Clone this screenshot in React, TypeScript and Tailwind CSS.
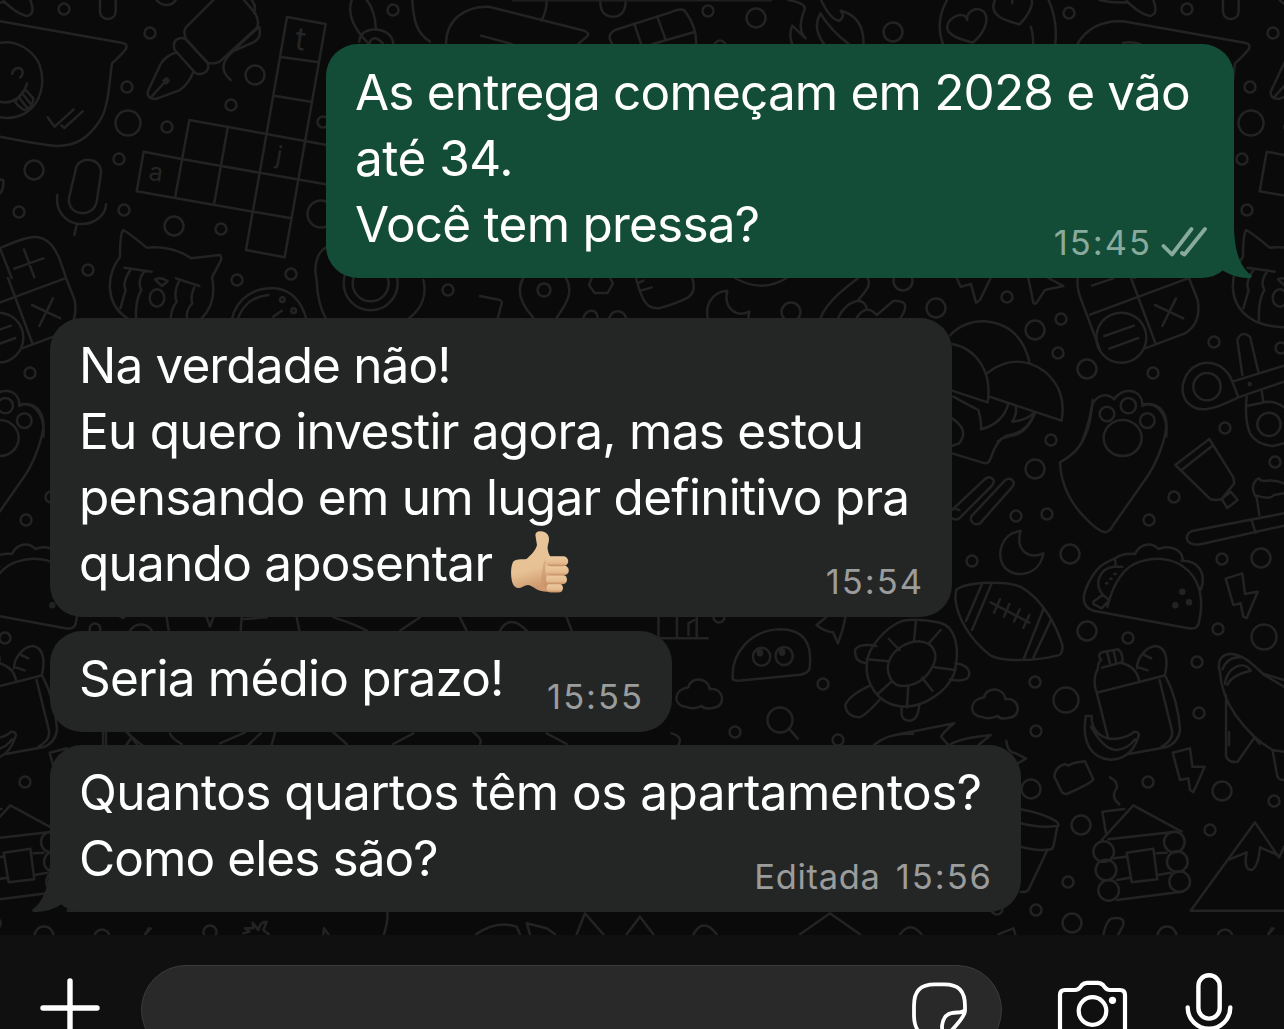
import React from "react";

interface MessageType {
    lines: { text: string, tracking: string }[]
    time: string
    edited?: boolean
    sent?: boolean
    tail?: boolean
    thumb?: boolean
    className: string
}

const messages: MessageType[] = [
    {
        lines: [
            {text: "As entrega começam em 2028 e vão", tracking: "tracking-[-0.83px]"},
            {text: "até 34.", tracking: "tracking-[-0.5px]"},
            {text: "Você tem pressa?", tracking: "tracking-[-0.76px]"},
        ],
        time: "15:45",
        sent: true,
        tail: true,
        className: "ml-[326px] mt-[44px] w-[908px] h-[234px] pt-[15px] bg-[#144d37]",
    },
    {
        lines: [
            {text: "Na verdade não!", tracking: "tracking-[-0.87px]"},
            {text: "Eu quero investir agora, mas estou", tracking: "tracking-[-0.73px]"},
            {text: "pensando em um lugar definitivo pra", tracking: "tracking-[-0.74px]"},
            {text: "quando aposentar", tracking: "tracking-[-0.76px]"},
        ],
        time: "15:54",
        thumb: true,
        className: "ml-[50px] mt-[40px] w-[902px] h-[299px] pt-[14px] bg-[#242626]",
    },
    {
        lines: [{text: "Seria médio prazo!", tracking: "tracking-[-0.81px]"}],
        time: "15:55",
        className: "ml-[50px] mt-[14px] w-[622px] h-[101px] pt-[14px] bg-[#242626]",
    },
    {
        lines: [
            {text: "Quantos quartos têm os apartamentos?", tracking: "tracking-[-0.53px]"},
            {text: "Como eles são?", tracking: "tracking-[-0.91px]"},
        ],
        time: "15:56",
        edited: true,
        tail: true,
        className: "ml-[50px] mt-[13px] w-[971px] h-[167px] pt-[14px] bg-[#242626]",
    },
]

// loose bubbles scattered between the doodles: x, y, radius
const dots = [
    [64, 9, 6], [150, 33, 6], [127, 87, 6], [255, 75, 10], [231, 105, 6], [128, 123, 13], [167, 127, 6],
    [119, 159, 6], [34, 170, 10], [19, 212, 6], [124, 210, 6], [174, 226, 10], [221, 229, 6], [88, 270, 6],
    [237, 280, 6], [291, 274, 6], [323, 122, 6], [321, 214, 14], [393, 10, 6], [708, 11, 6], [756, 18, 10],
    [893, 32, 10], [1069, 13, 6], [720, 46, 6], [1007, 297, 6], [936, 308, 10], [1061, 319, 6],
    [1035, 330, 10], [1058, 353, 6], [1087, 369, 10], [1153, 373, 6], [1214, 342, 6], [1281, 348, 6],
    [1225, 428, 6], [1051, 440, 6], [1035, 469, 10], [1016, 516, 6], [1047, 514, 6], [1174, 497, 6],
    [1149, 520, 6], [1275, 462, 6], [972, 561, 6], [1070, 554, 10], [1222, 559, 6], [1261, 558, 10],
    [1087, 631, 10], [1128, 638, 6], [1218, 629, 6], [1264, 637, 13], [1197, 662, 6], [823, 684, 6],
    [735, 732, 6], [838, 740, 6], [1035, 682, 6], [1066, 700, 13], [1199, 713, 6], [1036, 731, 6],
    [1031, 789, 10], [1222, 791, 10], [1148, 782, 6], [719, 617, 6], [1274, 801, 6], [1081, 825, 10],
    [1210, 830, 6], [1068, 882, 6], [1036, 910, 6], [1072, 923, 10], [997, 909, 6], [1167, 936, 10],
    [1225, 937, 8], [210, 932, 7], [448, 290, 6], [544, 290, 7], [791, 312, 10], [903, 281, 10],
    [780, 720, 13],
]

const Doodles = () => (
    <g fill="none" stroke="#232323" strokeWidth="2.5" strokeLinecap="round" strokeLinejoin="round"
       className="[&_*]:[vector-effect:non-scaling-stroke]">
        {dots.map(([cx, cy, r]) => <circle key={cx + "-" + cy} cx={cx} cy={cy} r={r - 0.5}/>)}

        {/* chat bubble, pen, crossword, microphone, crying cat */}
        <g transform="scale(.33333)">
            <path d="M0 64L365 128Q385 132 378 146Q366 163 336 190C325 270 325 330 294 370C265 412 230 438 170 438Q110 432 0 410"/>
            <path d="M0 128C50 120 95 148 117 190C140 250 120 310 80 337C50 355 25 356 0 352M0 305C35 315 70 290 81 250"/>
            <path d="M36 222C42 198 65 200 68 216Q68 228 60 232M45 305L75 268L100 295Q100 320 76 331Q60 325 45 305M58 293L80 322M68 282L91 310"/>
            <path d="M143 352L164 380L221 328M184 376L193 384L248 334"/>
            <path d="M10 3C35 25 55 43 80 48Q108 43 91 0"/>
            <path d="M300 0V33C300 50 313 57 323 57C337 57 347 48 347 33V0M470 0C485 20 515 20 527 0"/>
            <path d="M640 0L557 83Q548 100 561 122L622 187Q640 195 660 184L770 84Q780 68 766 40L732 0M755 0Q770 18 762 40M778 82Q785 115 760 127L700 153Q645 200 692 240M678 172L773 84"/>
            <path d="M540 115Q515 120 524 150L585 218Q600 228 618 215Q630 200 622 188L561 121Q550 112 540 115ZM531 157Q500 165 483 190L443 275Q442 300 470 296L538 271Q565 253 579 218M455 290L497 243M490 242l10 -7l6 7l-7 8z"/>
            <path d="M861 51L977 72L915 425L854 772L738 750L800 400ZM843 171L957 187M822 287L936 306M568 360L977 434M549 478L977 553M568 360L525 594M431 455L549 478M431 455L410 574L874 655M683 383L643 608M758 635L738 750"/>
            <path d="M228 505C235 468 307 470 303 520L290 605C280 655 202 650 207 594ZM172 585C165 640 205 675 250 672C290 670 318 640 318 613M230 675L223 705M0 540Q12 535 10 550Q10 570 0 580"/>
            <path d="M370 690Q395 705 440 743Q515 735 574 775L658 765Q670 770 658 790L636 832C650 900 625 935 605 955Q560 985 483 982C430 978 400 970 375 950C320 910 315 830 360 770Q360 700 370 690Z"/>
            <path d="M373 803L455 815M391 810Q365 850 377 870L361 925M432 815Q410 845 424 870Q405 900 408 962M528 835L598 858M536 845Q520 880 530 905Q510 930 512 970M583 862Q570 890 577 910Q555 930 562 965M465 838Q485 830 503 844L486 858Z"/>
            <ellipse cx="471" cy="894" rx="22" ry="26"/>
            <path d="M695 960C710 890 770 860 825 865C875 870 905 905 920 960M712 960C730 910 760 890 805 885M820 950l25 -18"/>
            <circle cx="847" cy="899" r="7"/><circle cx="881" cy="932" r="7"/>
            <path d="M980 742C950 755 940 800 950 840C952 900 965 935 980 960M1270 840C1280 880 1270 925 1220 960"/>
            <circle cx="1112" cy="850" r="81"/><circle cx="1112" cy="850" r="54"/>
            <path d="M0 744C40 728 90 705 115 712C150 720 165 745 178 775L198 833M0 745L35 834M43 806L130 775M72 748L103 832"/>
            <path d="M1055 0C1040 45 1065 90 1105 130M1100 0Q1125 30 1128 88M1078 125Q1080 90 1128 88Q1175 95 1180 130M1108 130Q1120 100 1148 130M1237 0C1240 60 1250 100 1290 125"/>
        </g>

        {/* strip above the first message */}
        <g transform="translate(320 0) scale(.6148 .33333)">
            <path d="M205 132C205 60 235 18 275 20L430 92Q440 102 434 110L420 132M262 107L312 132M368 0Q370 30 360 62M456 0Q455 50 477 50Q498 48 497 0"/>
            <path d="M475 130Q465 105 480 90L570 37Q590 20 595 37Q612 80 612 130M511 70L522 130M549 52L562 118M541 132L609 96"/>
            <path d="M762 0Q792 10 788 30Q775 90 790 115L768 77Q762 105 768 132M815 0Q830 60 845 62Q855 50 847 32Q885 50 884 132M814 40Q800 85 820 132M814 40Q830 90 860 132"/>
            <path d="M1020 0Q1000 65 1013 132M1185 0Q1200 60 1196 132M1156 80Q1160 100 1160 132M1053 60C1050 30 1020 50 1020 82C1020 110 1050 122 1062 128C1080 100 1090 60 1080 35C1065 15 1050 40 1053 60ZM1098 0C1085 50 1120 65 1138 73C1150 50 1160 20 1158 0M1126 0V10"/>
            <path d="M1268 0Q1290 10 1314 7M1232 132C1245 90 1270 60 1306 64"/>
        </g>

        {/* between the first two messages */}
        <g transform="translate(480 260) scale(.33333)">
            <path d="M0 108L60 120Q70 125 62 140L54 173M130 54C105 95 130 140 160 173M258 54C282 95 260 130 230 173"/>
            <path d="M335 54L327 75L344 99H383L399 70L390 54M310 173C320 145 350 145 353 173M388 173C400 145 430 150 438 173"/>
            <path d="M468 54C485 120 500 150 540 144Q590 130 625 112Q650 95 637 54M473 70L490 62M483 92L515 82"/>
            <path d="M765 54Q845 100 920 54M683 173C675 130 700 95 742 92C730 140 765 175 808 155L805 173"/>
            <path d="M1022 173C1040 125 1100 80 1135 54M1162 54Q1175 70 1155 95L1135 120M1075 173C1090 140 1120 120 1140 123Q1160 130 1160 148M1130 173Q1160 130 1190 165L1240 123Q1290 120 1270 160L1262 173"/>
            <path d="M1430 54L1442 80L1473 72L1488 128L1500 120L1532 54M1645 54L1660 128Q1665 135 1672 125L1695 90L1750 78L1705 54"/>
        </g>

        {/* pill pack, beach umbrella, paw, keys */}
        <g transform="translate(900 200) scale(.33333)">
            <path d="M533 234Q530 260 540 290L600 450M867 234L893 300Q905 370 855 400L735 445M570 344L862 236M693 234L767 432M576 257L640 235M765 315L850 355M828 295L787 378M613 408L702 377M628 446L715 414"/>
            <circle cx="664" cy="413" r="75"/>
            <path d="M150 406C180 375 220 363 255 364C325 370 370 410 388 485M156 432C225 445 278 510 263 607L156 572M263 518C320 475 380 475 435 515C480 555 495 600 485 662L268 590M160 590Q205 615 235 630Q245 660 243 688Q310 670 325 610M347 620Q352 640 337 665Q380 660 400 640M405 638C370 730 320 695 293 725"/>
            <path d="M548 720Q570 660 573 630C580 585 620 575 642 598C665 560 725 565 727 613C770 605 805 640 799 710"/>
            <circle cx="621" cy="642" r="22"/><circle cx="685" cy="617" r="23"/><circle cx="742" cy="662" r="22"/>
            <path d="M997 545C980 500 940 480 900 492C850 510 835 570 860 605C890 640 930 635 1015 592ZM997 545L1152 497M1015 592L1152 545M1027 525L1012 420Q1025 390 1050 410L1075 515M1040 590Q1033 660 1050 700Q1070 735 1120 738L1152 730M1085 572L1090 605M1040 618L1100 605Q1130 605 1152 622"/>
            <circle cx="921" cy="560" r="41"/><circle cx="1107" cy="673" r="35"/><circle cx="1049" cy="552" r="3"/>
        </g>

        {/* french fries, moon, football, taco, toothbrush */}
        <g transform="translate(900 400) scale(.33333)">
            <path d="M156 160L255 190Q268 190 273 172Q290 120 320 107Q380 100 405 40M156 55Q210 90 177 130L156 138M156 330L255 237Q270 225 281 240Q283 250 275 258L178 355Q165 362 156 355M164 325L178 330M213 350L315 241Q330 230 341 245Q343 255 335 263L240 370Q220 378 213 360Z"/>
            <path d="M362 393C300 400 290 465 312 500C345 540 420 525 430 460C385 480 345 450 362 393Z"/>
            <path d="M578 0Q573 60 562 90C545 140 520 165 480 187C482 260 520 320 560 358Q590 390 615 397Q630 395 640 375L745 225C780 170 805 90 798 60C790 15 750 5 727 18"/>
            <ellipse cx="668" cy="114" rx="57" ry="54"/>
            <path d="M928 117L826 195L932 298Q950 302 965 297L1003 250L1000 232ZM845 210L940 135M965 297L992 275L1013 300L982 324Z"/>
            <path d="M1152 340L875 393Q855 405 863 422Q875 438 905 432L1152 377M1055 362L1067 398M1078 345L1070 292C1050 270 1060 240 1078 235Q1080 245 1100 242Q1130 240 1152 250M1070 287Q1110 300 1122 285L1152 280"/>
            <path d="M168 570C200 545 320 540 365 562C430 600 470 680 487 735Q490 765 470 767C400 785 300 785 270 765C210 720 170 650 166 595ZM246 552L198 663M275 550L216 690M430 628L372 775M453 660L400 773M272 607L388 668M300 598L282 638M328 612L312 650M359 628L342 665M388 645L370 683"/>
            <path d="M580 632C545 620 545 590 565 550C590 500 610 490 645 475Q670 458 705 462C720 430 755 425 775 447C805 435 845 445 848 478M580 632L865 685Q895 690 897 665C912 600 900 560 880 530C845 480 780 465 720 485C670 500 640 550 622 620M645 475L647 495M580 605L608 584L628 600L605 625L580 612ZM608 584C580 550 600 505 640 500L667 500M845 482C895 480 920 520 903 568"/>
            <g fill="#232323">
                <circle cx="847" cy="575" r="6"/><circle cx="826" cy="616" r="6"/><circle cx="867" cy="607" r="6"/>
            </g>
            <path d="M631 536h4M643 522h4M618 550h4"/>
            <path d="M977 536L1027 520L1035 582L1073 575L1040 654L1030 650L1022 610L1000 615Z"/>
        </g>

        {/* turtle, backpack, rocket */}
        <g transform="translate(640 600) scale(.4107 .33333)">
            <path d="M0 115H165M45 50V112M90 50V110M118 105V70L132 60M138 50V110"/>
            <path d="M226 238C220 160 270 90 340 88C400 88 420 130 413 205Q410 220 390 224L240 242Q226 242 226 238Z"/>
            <ellipse cx="296" cy="170" rx="21" ry="27"/><ellipse cx="351" cy="168" rx="21" ry="27"/>
            <g fill="#232323">
                <ellipse cx="292" cy="158" rx="5" ry="8"/><ellipse cx="346" cy="156" rx="5" ry="8"/>
            </g>
            <path d="M453 52L430 75Q450 95 470 97L482 130Q495 90 500 52"/>
            <path d="M110 320C80 315 80 270 118 262C122 230 165 230 170 268C205 260 210 320 180 323Q160 330 150 318Q130 330 110 320ZM830 350C800 345 800 300 838 292C842 260 885 260 890 298C925 290 930 350 900 353Q880 360 870 348Q850 360 830 350ZM362 385L384 416"/>
            <path d="M640 62C600 80 555 140 552 190C548 250 580 310 630 318C690 330 750 270 765 220C780 150 770 80 730 68C700 60 670 55 640 62Z"/>
            <path d="M603 205C605 155 645 125 680 124C725 130 725 175 710 205C690 250 650 265 625 255Q605 240 603 205ZM672 62L667 124M732 90L703 130M606 117L632 150M552 178L604 184M768 210L717 202M712 272L687 233M650 322L653 260M579 282L612 245"/>
            <path d="M575 138C540 130 520 140 524 160Q525 185 550 190M768 190C800 195 805 215 800 230Q790 248 755 238M560 257Q510 285 500 315Q502 350 535 352Q550 345 583 300M637 322V345Q640 362 658 362Q678 358 680 312"/>
            <path d="M570 434Q610 395 665 402M633 402L765 370Q740 395 733 410L750 434M757 432Q780 415 854 405L825 434M892 423Q895 460 915 460L940 476L920 490"/>
            <path d="M1115 205Q1115 185 1123 180Q1110 160 1130 155L1165 148Q1178 165 1174 187L1125 203M1137 155L1145 195M1153 152L1160 190M1115 205Q1100 240 1112 278L1140 415M1112 278L1275 227M1170 188C1195 195 1210 210 1215 240M1210 205C1210 170 1235 138 1258 138C1285 145 1285 190 1278 225M1228 165L1245 175M1216 203L1236 211M1265 240L1295 390Q1300 420 1270 440M1280 230Q1310 300 1315 390Q1310 430 1280 442L1190 462"/>
            <path d="M1085 348H1100V362C1105 400 1130 420 1160 416Q1190 412 1203 395Q1220 395 1212 415C1200 460 1175 478 1145 479C1100 475 1075 430 1085 350M1098 380Q1130 450 1160 450Q1190 445 1205 418"/>
            <path d="M1568 260L1520 225C1490 190 1465 160 1435 162C1412 165 1405 190 1412 215C1415 270 1430 310 1450 345Q1490 415 1540 450L1568 455M1427 285V470Q1435 490 1455 485L1495 415M1515 220L1568 240M1424 252C1430 200 1470 180 1487 212Q1440 225 1430 255M1418 208Q1430 170 1462 172M1540 450L1552 530Q1555 540 1568 540"/>
        </g>

        {/* cup, bread, cabin, mountain */}
        <g transform="translate(960 700) scale(.33333)">
            <path d="M283 230Q285 200 315 192L325 197Q335 190 345 188L375 184L400 238Q395 250 320 282Q310 283 305 275ZM450 232Q475 245 470 265Q450 290 478 313M638 158L690 145L697 200L734 200L700 277L690 270L685 235L660 240Z"/>
            <path d="M182 328Q250 340 290 365Q300 375 292 380L280 440Q275 450 262 450L205 570Q200 577 182 576M182 370Q240 385 290 378M182 440Q240 455 275 448"/>
            <path d="M425 420L520 316L665 395M427 335L493 327M427 335L438 400M445 418L640 396M460 475L498 470M470 540L510 533M590 460L620 458M593 525L632 518M470 600L665 575M500 458L580 446L592 538L515 547Z"/>
            <circle cx="431" cy="455" r="31"/><circle cx="438" cy="510" r="31"/><circle cx="446" cy="571" r="31"/>
            <circle cx="643" cy="426" r="31"/><circle cx="652" cy="485" r="31"/><circle cx="659" cy="545" r="31"/>
            <path d="M972 632H692L885 367L957 473L972 440M808 478L860 457Q850 510 875 510Q895 500 900 442L957 467"/>
            <path d="M115 703L160 685L166 703M430 705Q440 655 460 655Q495 650 490 675L475 703M925 703L935 685"/>
        </g>

        {/* strip above the composer */}
        <g transform="translate(0 900) scale(.33333)">
            <path d="M436 103L452 85M730 100L748 95L735 85L760 85L758 68L775 90Q780 65 800 65L790 90L806 103M970 103L972 85L985 103M1152 103Q1165 60 1162 36"/>
            <path d="M1428 103Q1490 60 1550 80L1560 103M1590 103L1580 70L1640 85L1665 103M1730 103L1755 40L1810 103M1880 103L1920 50L1960 103M2080 103Q2110 50 2150 103M2400 103L2490 40L2580 103M2700 103Q2730 60 2765 103"/>
        </g>

        {/* slits between the grey messages */}
        <g transform="translate(0 580) scale(.33333)">
            <path d="M500 112L506 152M620 112L630 140L640 112M725 112L722 152M725 118L800 112M890 112L898 152M318 457V495M385 460L410 492M510 460Q515 475 545 492M660 490L735 457M745 495L782 460M825 457L815 495"/>
            <path d="M1000 112Q1060 130 1100 152M1200 152L1260 112M1380 112L1400 152M1500 152Q1530 100 1580 152M1700 112L1715 152M1000 457L1040 492M1180 492L1240 460M1420 457Q1450 480 1440 492M1640 460L1700 492M2015 460Q2050 470 2035 495"/>
        </g>
    </g>
)

const Wallpaper = () => (
    <svg className="absolute inset-0" width="1284" height="935" viewBox="0 0 1284 935" aria-hidden="true">
        <Doodles/>
        <g transform="translate(1123 0)"><Doodles/></g>
        <g transform="translate(-1123 0)"><Doodles/></g>
        <g fill="#252525" className="font-['Inter',sans-serif]">
            <text x="295" y="50" fontSize="32" transform="rotate(8 300 40)">t</text>
            <text x="149" y="181" fontSize="25" transform="rotate(10 157 173)">a</text>
            <text x="276" y="164" fontSize="25" transform="rotate(10 280 157)">j</text>
        </g>
        <path d="M512 0.5H772" stroke="#1e1e1e" strokeWidth="2"/>
    </svg>
)

const Thumb = () => (
    <svg className="ml-[19px] mb-[1px] shrink-0" width="60" height="64" viewBox="0 0 60 64">
        <defs>
            <linearGradient id="skin" x1="0" y1="0" x2="0.2" y2="1">
                <stop offset="0" stopColor="#e9c79c"/>
                <stop offset="0.7" stopColor="#e6c194"/>
                <stop offset="1" stopColor="#cf9a70"/>
            </linearGradient>
            <linearGradient id="finger" x1="0" y1="0" x2="0" y2="1">
                <stop offset="0" stopColor="#edcba0"/>
                <stop offset="0.7" stopColor="#e3b98c"/>
                <stop offset="1" stopColor="#c58b61"/>
            </linearGradient>
        </defs>
        <path d="M24.500 5C24 1 27 0.300 30 0.300C35 0.500 38 4 38 8C38 12 36 15 36.700 18C37 21 38 23 39 25L42 60C36 61.500 30 60.500 25 58C22 56 20 54.500 17 54C13 54 11 57.500 7 57C3 56.500 1.500 53 0.700 49C-0.500 43 0 35 2 31C4 27.500 11 28.500 15.500 28C20 24 25 19 26 14Z"
              fill="url(#skin)"/>
        <path d="M38 26C33 30 34 38 34.500 44L38 60C31 57 29 50 31 43C32 37 31 30 38 26Z" fill="#c9946a" opacity="0.55"/>
        <rect x="35.500" y="52.500" width="16.500" height="9" rx="4.400" fill="url(#finger)"/>
        <rect x="35" y="44" width="21" height="9.200" rx="4.500" fill="url(#finger)"/>
        <rect x="34.500" y="34.500" width="23.300" height="10" rx="5" fill="url(#finger)"/>
        <rect x="34.500" y="25.200" width="22.700" height="10" rx="5" fill="url(#finger)"/>
    </svg>
)

const Ticks = () => (
    <svg className="ml-[9px] -mr-[2px] mb-[3px]" width="47" height="32" viewBox="0 0 47 32" fill="none" stroke="#89ab9d"
         strokeWidth="3.8" strokeLinecap="round" strokeLinejoin="round">
        <path d="M2.500 20L11 28.500L30.500 3M21 27L23.500 28.500L44 3"/>
    </svg>
)

const Message = ({message}: { message: MessageType }) => {
    const last = message.lines.length - 1
    return (
        <div className={"relative shrink-0 rounded-[32px] pl-[29px] pr-[28px] text-white " + message.className}>
            {message.tail && (
                <svg className={message.sent ? "absolute bottom-0 -right-[18px]" : "absolute bottom-0 -left-[18px] -scale-x-100"}
                     width="50" height="54" viewBox="0 0 50 54">
                    <path d="M14 0H32C32 27 38 43 50 52Q50 54 46 54C36 54 26 50 19.500 45.500L8 36Z"
                          fill={message.sent ? "#144d37" : "#242626"}/>
                </svg>
            )}
            {message.lines.map((line, i) => (
                <div key={line.text} className="relative flex h-[66px] items-end whitespace-nowrap">
                    <p className={"text-[49.5px] leading-[66px] " + line.tracking}>{line.text}</p>
                    {i === last && message.thumb && <Thumb/>}
                    {i === last && (
                        <div className={"ml-auto -mb-[4px] flex items-end text-[34.5px] leading-[36px] " +
                            (message.sent ? "text-[#89ab9d]" : "text-[#9b9c9c]")}>
                            {message.edited && <span className="mr-[15px] tracking-[0.7px]">Editada</span>}
                            <span className="tracking-[2px]">{message.time}</span>
                            {message.sent && <Ticks/>}
                        </div>
                    )}
                </div>
            ))}
        </div>
    )
}

const Composer = () => (
    <div className="relative mt-auto flex h-[94px] shrink-0 items-start overflow-hidden bg-[#101010]">
        <svg className="ml-[40px] mt-[43px] shrink-0" width="60" height="60" viewBox="0 0 60 60" stroke="#fff"
             strokeWidth="5.4" strokeLinecap="round">
            <path d="M3 30H57M30 3V57"/>
        </svg>
        <div className="ml-[41px] mt-[30px] flex h-[90px] w-[861px] shrink-0 justify-end rounded-[45px] border border-[#3b3b3b] bg-[#292929]">
            <svg className="mr-[33px] mt-[16px]" width="57" height="57" viewBox="0 0 57 57" fill="none" stroke="#fff"
                 strokeWidth="3.8" strokeLinecap="round" strokeLinejoin="round">
                <path d="M33 55H24C9 55 3 48 3 33V24C3 9 9 2.400 24 2.400H33C48 2.400 54 9 54 24V29C54 35 37 53 33 55C31 50 31 47 31 44C32 33 38 30.500 46 30.500Q52 30.500 54 28"/>
            </svg>
        </div>
        <svg className="ml-[54px] mt-[45px] shrink-0" width="73" height="60" viewBox="0 0 73 60" fill="none" stroke="#fff"
             strokeWidth="4.2" strokeLinecap="round" strokeLinejoin="round">
            <path d="M4 50V15Q4 10 9 10H19Q22 10 24 7.500L26 5Q28 2.800 31 2.800H42Q45 2.800 47 5L49 7.500Q51 10 54 10H64Q69 10 69 15V50Q69 56 63 56H10Q4 56 4 50Z"/>
            <circle cx="36.500" cy="31" r="13.800"/>
            <circle cx="56.500" cy="20.300" r="3.600" fill="#fff" stroke="none"/>
        </svg>
        <svg className="ml-[55px] mt-[37px] shrink-0" width="50" height="70" viewBox="0 0 50 70" fill="none" stroke="#fff"
             strokeWidth="4.4" strokeLinecap="round">
            <rect x="14.400" y="3.300" width="21.300" height="43.300" rx="10.600"/>
            <path d="M3.700 35.500a21.300 21.300 0 0 0 42.600 0M25 57V67"/>
        </svg>
    </div>
)

const App = () => {
    return (
        <div className="relative flex h-[1029px] w-[1284px] flex-col overflow-hidden bg-[#0a0a0a] font-['Inter',sans-serif]">
            <Wallpaper/>
            {messages.map((message) => <Message key={message.time} message={message}/>)}
            <Composer/>
        </div>
    )
}

export default App
